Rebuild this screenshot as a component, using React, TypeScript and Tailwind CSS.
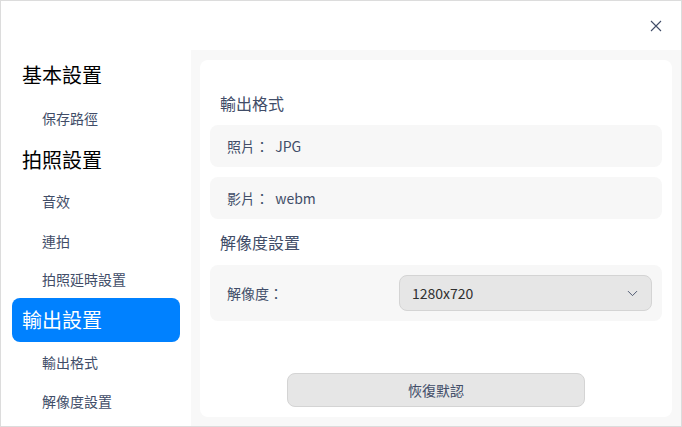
import { ChevronDown } from "lucide-react";

const font = { fontFamily: '"Noto Sans CJK TC", "Noto Sans", sans-serif' };

type NavItem = { label: string; level: 0 | 1; h: string; active?: boolean };

const nav: NavItem[] = [
  { label: "基本設置", level: 0, h: "h-[44px]" },
  { label: "保存路徑", level: 1, h: "h-[42px]" },
  { label: "拍照設置", level: 0, h: "h-[42px]" },
  { label: "音效", level: 1, h: "h-[40px]" },
  { label: "連拍", level: 1, h: "h-[40px]" },
  { label: "拍照延時設置", level: 1, h: "h-[37px]" },
  { label: "輸出設置", level: 0, h: "h-[44px]", active: true },
  { label: "輸出格式", level: 1, h: "h-[40px]" },
  { label: "解像度設置", level: 1, h: "h-[38px]" },
];

export default function App() {
  return (
    <div
      className="flex h-[427px] w-[682px] flex-col border border-[#dcdcdc] bg-white"
      style={font}
    >
      {/* title bar */}
      <div className="flex h-[49px] shrink-0 items-center justify-end pr-[19px]">
        <svg width="12" height="12" viewBox="0 0 12 12" className="text-[#414d68]">
          <path d="M1 1L11 11M11 1L1 11" stroke="currentColor" strokeWidth="1.1" />
        </svg>
      </div>

      <div className="flex min-h-0 flex-1">
        {/* sidebar */}
        <div className="w-[190px] shrink-0 bg-white px-[10px] pt-[3px]">
          {nav.map((item) => (
            <div
              key={item.label}
              className={`${item.h} flex items-center ${
                item.active
                  ? "mx-[1px] rounded-lg bg-[#0081ff] pl-[10px] text-[20px] text-white"
                  : item.level === 0
                    ? "pl-[11px] text-[20px] text-black"
                    : "pl-[31px] text-[14px] text-[#414d68]"
              }`}
            >
              {item.label}
            </div>
          ))}
        </div>

        {/* content */}
        <div className="flex-1 bg-[#f8f8f8] pb-[9px] pl-[9px] pr-[9px] pt-[10px]">
          <div className="flex h-full flex-col rounded-lg bg-white px-[10px] pb-[10px]">
            <div className="mt-[31px] mb-[10px] h-[24px] pl-[10px] text-[16px] leading-[24px] text-[#414d68]">
              輸出格式
            </div>
            <div className="flex h-[42px] items-center rounded-lg bg-[#f7f7f7] pl-[17px] text-[14px] text-[#414d68]">
              照片：&nbsp;&nbsp;JPG
            </div>
            <div className="mt-[10px] flex h-[42px] items-center rounded-lg bg-[#f7f7f7] pl-[17px] text-[14px] text-[#414d68]">
              影片：&nbsp;&nbsp;webm
            </div>
            <div className="mt-[11px] mb-[11px] h-[24px] pl-[10px] text-[16px] leading-[24px] text-[#414d68]">
              解像度設置
            </div>
            <div className="flex h-[56px] items-center rounded-lg bg-[#f7f7f7] pl-[17px] pr-[10px] text-[14px] text-[#414d68]">
              <span className="w-[172px]">解像度：</span>
              <div className="flex h-[36px] flex-1 items-center justify-between rounded-lg border border-[#d4d4d4] bg-[#e6e6e6] pl-[12px] pr-[10px] text-[#303030]">
                <span>1280x720</span>
                <ChevronDown size={17} strokeWidth={1.3} className="text-[#414d68]" />
              </div>
            </div>
            <div className="mt-auto flex justify-center">
              <div className="flex h-[34px] w-[298px] items-center justify-center rounded-lg border border-[#d4d4d4] bg-[#e6e6e6] text-[14px] text-[#414d68]">
                恢復默認
              </div>
            </div>
          </div>
        </div>
      </div>
    </div>
  );
}
